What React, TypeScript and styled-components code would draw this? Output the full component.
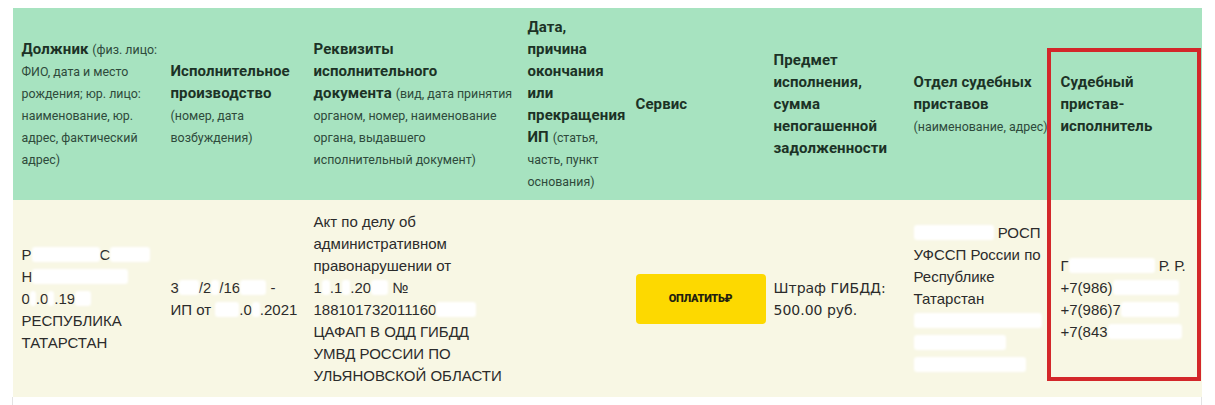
import React from "react";
import styled, { createGlobalStyle } from "styled-components";

const Global = createGlobalStyle`
  html, body { margin: 0; padding: 0; background: #ffffff; }
  body { font-family: "Liberation Sans", Arial, sans-serif; }
`;

const Page = styled.div`
  width: 1215px;
  height: 405px;
  overflow: hidden;
  padding: 8px 14px 0 12px;
  box-sizing: border-box;
`;

const Wrap = styled.div`
  position: relative;
  width: 1189px;
`;

const Table = styled.table`
  width: 1189px;
  border-collapse: collapse;
  table-layout: fixed;
`;

const HeadRow = styled.tr`
  height: 192px;
  background: #a7e3c0;
`;

const BodyRow = styled.tr`
  height: 197px;
  background: #f8f7e4;
`;

const SpacerRow = styled.tr`
  height: 20px;
  background: #ffffff;
  td:first-child {
    border-left: 1px solid #e3e3e3;
  }
  td:last-child {
    border-right: 1px solid #e3e3e3;
  }
`;

const Th = styled.th`
  vertical-align: middle;
  text-align: left;
  padding: 0 0 0 9px;
  font-family: Roboto, "Noto Sans", sans-serif;
  font-size: 15px;
  font-weight: 700;
  line-height: 22px;
  color: #1c3226;
  letter-spacing: 0.1px;
  white-space: nowrap;
`;

const Note = styled.span`
  font-size: 12.4px;
  font-weight: 400;
  color: #2e4a3b;
  letter-spacing: 0;
`;

const Line = styled.div`
  white-space: nowrap;
  height: 22px;
`;

const Td = styled.td`
  vertical-align: middle;
  text-align: left;
  padding: 0 0 0 9px;
  font-family: "Liberation Sans", Arial, sans-serif;
  font-size: 15px;
  line-height: 22px;
  color: #2b2b2b;
`;

const WideTd = styled(Td)`
  font-family: "DejaVu Sans", Verdana, sans-serif;
  font-size: 14px;
`;

const Redact = styled.span<{ $w: number }>`
  display: inline-block;
  width: ${(p) => p.$w}px;
  height: 15px;
  vertical-align: -2px;
  background: #ffffff;
  border-radius: 3px;
  filter: blur(1.2px);
`;

const PayButton = styled.button`
  width: 130px;
  height: 50px;
  border: none;
  border-radius: 4px;
  background: #fdd900;
  color: #231f0f;
  font-family: "Roboto", "Liberation Sans", sans-serif;
  font-size: 11px;
  font-weight: 900;
  letter-spacing: -0.3px;
  padding: 0;
  cursor: pointer;
`;

const Highlight = styled.div`
  position: absolute;
  left: 1035px;
  top: 40px;
  width: 154px;
  height: 333px;
  border: 4px solid #d3272a;
  box-sizing: border-box;
  pointer-events: none;
`;

const widths = [149, 143, 214, 108, 138, 140, 147, 150];

export default function App() {
  return (
    <>
      <Global />
      <Page>
        <Wrap>
          <Table>
            <colgroup>
              {widths.map((w, i) => (
                <col key={i} style={{ width: w }} />
              ))}
            </colgroup>
            <thead>
              <HeadRow>
                <Th>
                  <Line>Должник <Note>(физ. лицо:</Note></Line>
                  <Line><Note>ФИО, дата и место</Note></Line>
                  <Line><Note>рождения; юр. лицо:</Note></Line>
                  <Line><Note>наименование, юр.</Note></Line>
                  <Line><Note>адрес, фактический</Note></Line>
                  <Line><Note>адрес)</Note></Line>
                </Th>
                <Th>
                  <Line>Исполнительное</Line>
                  <Line>производство</Line>
                  <Line><Note>(номер, дата</Note></Line>
                  <Line><Note>возбуждения)</Note></Line>
                </Th>
                <Th>
                  <Line>Реквизиты</Line>
                  <Line>исполнительного</Line>
                  <Line>документа <Note>(вид, дата принятия</Note></Line>
                  <Line><Note>органом, номер, наименование</Note></Line>
                  <Line><Note>органа, выдавшего</Note></Line>
                  <Line><Note>исполнительный документ)</Note></Line>
                </Th>
                <Th>
                  <Line>Дата,</Line>
                  <Line>причина</Line>
                  <Line>окончания</Line>
                  <Line>или</Line>
                  <Line>прекращения</Line>
                  <Line>ИП <Note>(статья,</Note></Line>
                  <Line><Note>часть, пункт</Note></Line>
                  <Line><Note>основания)</Note></Line>
                </Th>
                <Th>
                  <Line>Сервис</Line>
                </Th>
                <Th>
                  <Line>Предмет</Line>
                  <Line>исполнения,</Line>
                  <Line>сумма</Line>
                  <Line>непогашенной</Line>
                  <Line>задолженности</Line>
                </Th>
                <Th>
                  <Line>Отдел судебных</Line>
                  <Line>приставов</Line>
                  <Line><Note>(наименование, адрес)</Note></Line>
                </Th>
                <Th>
                  <Line>Судебный</Line>
                  <Line>пристав-</Line>
                  <Line>исполнитель</Line>
                </Th>
              </HeadRow>
            </thead>
            <tbody>
              <BodyRow>
                <Td>
                  <Line>Р<Redact $w={68} />С<Redact $w={40} /></Line>
                  <Line>Н<Redact $w={96} /></Line>
                  <Line>0<Redact $w={6} />.0<Redact $w={6} />.19<Redact $w={16} /></Line>
                  <Line>РЕСПУБЛИКА</Line>
                  <Line>ТАТАРСТАН</Line>
                </Td>
                <Td>
                  <Line>3<Redact $w={20} />/2<Redact $w={8} />/16<Redact $w={26} /> -</Line>
                  <Line>ИП от <Redact $w={24} />.0<Redact $w={8} />.2021</Line>
                </Td>
                <Td>
                  <Line>Акт по делу об</Line>
                  <Line>административном</Line>
                  <Line>правонарушении от</Line>
                  <Line>1<Redact $w={8} />.1<Redact $w={8} />.20<Redact $w={17} /> №</Line>
                  <Line>188101732011160<Redact $w={40} /></Line>
                  <Line>ЦАФАП В ОДД ГИБДД</Line>
                  <Line>УМВД РОССИИ ПО</Line>
                  <Line>УЛЬЯНОВСКОЙ ОБЛАСТИ</Line>
                </Td>
                <Td />
                <Td>
                  <PayButton>ОПЛАТИТЬ₽</PayButton>
                </Td>
                <WideTd>
                  <Line>Штраф ГИБДД:</Line>
                  <Line>500.00 руб.</Line>
                </WideTd>
                <Td>
                  <Line><Redact $w={80} /> РОСП</Line>
                  <Line>УФССП России по</Line>
                  <Line>Республике</Line>
                  <Line>Татарстан</Line>
                  <Line><Redact $w={128} /></Line>
                  <Line><Redact $w={92} /></Line>
                  <Line><Redact $w={112} /></Line>
                </Td>
                <Td>
                  <Line>Г<Redact $w={86} /> Р. Р.</Line>
                  <Line>+7(986)<Redact $w={66} /></Line>
                  <Line>+7(986)7<Redact $w={58} /></Line>
                  <Line>+7(843<Redact $w={74} /></Line>
                </Td>
              </BodyRow>
              <SpacerRow>
                {widths.map((_, i) => (
                  <td key={i} />
                ))}
              </SpacerRow>
            </tbody>
          </Table>
          <Highlight />
        </Wrap>
      </Page>
    </>
  );
}
